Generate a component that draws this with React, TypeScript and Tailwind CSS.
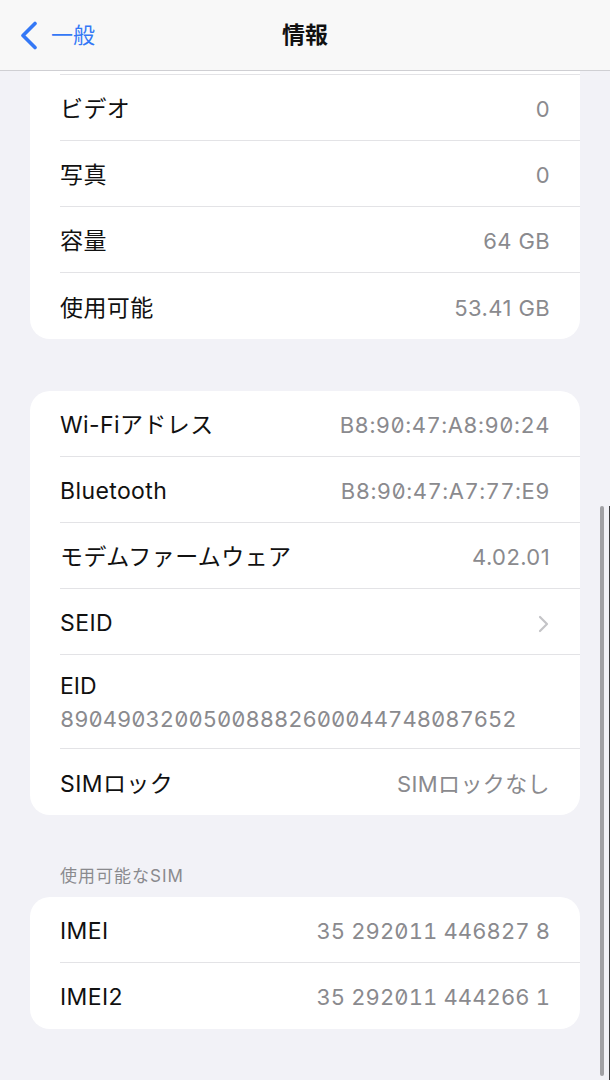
import React from "react";

type Item = { label: string; value?: string; chevron?: boolean; mono?: "mac" | "imei" };

const FONT = "font-['Inter','Noto_Sans_CJK_JP',sans-serif]";

function Row({ item, last }: { item: Item; last?: boolean }) {
  const valueCls =
    item.mono === "mac"
      ? "slashed-zero tabular-nums tracking-[0.5px]"
      : item.mono === "imei"
        ? "slashed-zero tabular-nums tracking-[0.1px]"
        : "tracking-[0.4px]";
  return (
    <div className="pl-[30px]">
      <div
        className={`flex h-[66px] items-center justify-between pr-[30px] pt-[4px] ${
          last ? "" : "border-b border-[#e3e3e6]"
        }`}
      >
        <span className="text-[23px] tracking-[0.4px] text-[#111]">{item.label}</span>
        {item.chevron ? (
          <svg width="11" height="18" viewBox="0 0 11 18" className="mr-[1px]">
            <path d="M2 2l7 7-7 7" fill="none" stroke="#c4c4c7" strokeWidth="2.2" strokeLinecap="round" strokeLinejoin="round" />
          </svg>
        ) : (
          <span className={`text-[22px] text-[#8a8a8e] ${valueCls}`}>{item.value}</span>
        )}
      </div>
    </div>
  );
}

function Card({ children }: { children: React.ReactNode }) {
  return <div className="mx-[30px] overflow-hidden rounded-[20px] bg-white">{children}</div>;
}

const storage: Item[] = [
  { label: "ビデオ", value: "0" },
  { label: "写真", value: "0" },
  { label: "容量", value: "64 GB" },
  { label: "使用可能", value: "53.41 GB" },
];

const network: Item[] = [
  { label: "Wi-Fiアドレス", value: "B8:90:47:A8:90:24", mono: "mac" },
  { label: "Bluetooth", value: "B8:90:47:A7:77:E9", mono: "mac" },
  { label: "モデムファームウェア", value: "4.02.01" },
  { label: "SEID", chevron: true },
];

const sims: Item[] = [
  { label: "IMEI", value: "35 292011 446827 8", mono: "imei" },
  { label: "IMEI2", value: "35 292011 444266 1", mono: "imei" },
];

export default function App() {
  return (
    <div className={`relative flex h-[1080px] w-[610px] flex-col overflow-hidden bg-[#f2f2f7] ${FONT}`}>
      {/* nav bar */}
      <header className="relative z-10 flex h-[71px] shrink-0 items-center border-b border-[#cfcfd3] bg-[#f8f8f8]">
        <div className="flex items-center gap-[13px] pl-[20px] text-[#3478f6]">
          <svg width="18" height="29" viewBox="0 0 18 29">
            <path d="M15 2.5L3 14.5l12 12" fill="none" stroke="#3478f6" strokeWidth="3.6" strokeLinecap="round" strokeLinejoin="round" />
          </svg>
          <span className="text-[22px]">一般</span>
        </div>
        <h1 className="absolute left-1/2 -translate-x-1/2 text-[23px] font-bold text-[#111]">情報</h1>
      </header>

      <main className="flex-1 overflow-hidden">
        <div className="-mt-[62px]">
          <Card>
            {/* row scrolled away under the nav bar */}
            <div className="pl-[30px]">
              <div className="h-[66px] border-b border-[#e3e3e6]" />
            </div>
            {storage.map((it, i) => (
              <Row key={it.label} item={it} last={i === storage.length - 1} />
            ))}
          </Card>
        </div>

        <div className="mt-[52px]">
          <Card>
            {network.map((it) => (
              <Row key={it.label} item={it} />
            ))}
            <div className="pl-[30px]">
              <div className="border-b border-[#e3e3e6] pb-[16px] pr-[30px] pt-[18px]">
                <div className="text-[23px] leading-[26px] text-[#111]">EID</div>
                <div className="mt-[7px] text-[22px] leading-[26px] text-[#8a8a8e] slashed-zero tabular-nums">
                  89049032005008882600044748087652
                </div>
              </div>
            </div>
            <Row item={{ label: "SIMロック", value: "SIMロックなし" }} last />
          </Card>
        </div>

        <div className="mt-[49px] pb-[7px] pl-[60px] text-[17px] tracking-[1px] text-[#8a8a8e]">使用可能なSIM</div>
        <Card>
          {sims.map((it, i) => (
            <Row key={it.label} item={it} last={i === sims.length - 1} />
          ))}
        </Card>
      </main>

      {/* scroll indicator */}
      <div className="absolute left-[600px] top-[506px] h-[570px] w-[4px] rounded-full bg-[#a1a1a5]" />
      <div className="absolute left-[609px] top-[506px] h-[574px] w-[1px] bg-[#3a3a3c]" />
    </div>
  );
}
